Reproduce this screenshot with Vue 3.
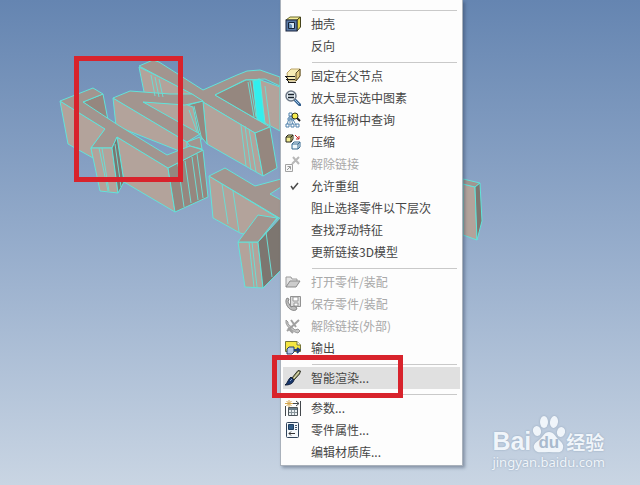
<template>
  <div class="viewport">
    <!-- 图标定义 -->
    <svg class="defs" aria-hidden="true">
      <symbol id="shell" viewBox="0 0 16 16">
        <path d="M1 4 5 1H15L12 4Z" fill="#f7ef9a" stroke="#6b6a2c" />
        <path d="M12 4 15.500 1V11L12 15Z" fill="#e3d54a" stroke="#45431c" />
        <rect x="1" y="4" width="11" height="11" fill="#5a7aa6" stroke="#1c2740" />
        <path d="M3.500 6.500H9.500V12.500H3.500Z" fill="#d7e8f5" stroke="#152238" />
        <path d="M4 12V7L7 9V12Z" fill="#6b94bd" />
      </symbol>
      <symbol id="fixed" viewBox="0 0 16 16">
        <path d="M2 5 6 1H15V8L11 13H3Z" fill="#f8edb5" stroke="#b9a368" />
        <path d="M11 5 15 1V8L11 13Z" fill="#e5cd82" stroke="#5b4d28" />
        <path d="M0 8.500H10M1 11.500H10M3 14.500H11M0 8 3 11M1 11 4 14" fill="none" stroke="#1d1c18" />
      </symbol>
      <symbol id="zoom" viewBox="0 0 16 16">
        <path d="m10 10 5 5" stroke="#35608f" stroke-width="3" stroke-linecap="round" />
        <path d="m10 10 4 4" stroke="#9bc4e5" />
        <circle cx="6" cy="6" r="5" fill="#e9f1f7" stroke="#6d7886" stroke-width="1.500" />
        <path d="M3 4.500H9M3 7.500H9" stroke="#17202a" stroke-width="1.500" />
      </symbol>
      <symbol id="tree" viewBox="0 0 16 16">
        <path d="M5 2 2 13M5 2 8 13M5 6V13M5 2 11 13" fill="none" stroke="#5d8ab0" />
        <path d="M4 1H7V4H4ZM3 6H5V8H3ZM7 6H9V8H7ZM1 12H4V15H1ZM6 12H9V15H6ZM11 12H14V15H11Z" fill="#fff" stroke="#4f80ab" />
        <circle cx="10" cy="4" r="3" fill="#f5ec4f" stroke="#39391b" />
        <path d="m12 6 3 3" stroke="#222" stroke-width="2" />
      </symbol>
      <symbol id="compress" viewBox="0 0 16 16">
        <path d="M1 3 3 1H8V5L6 8H1Z" fill="#f3ee93" stroke="#272719" />
        <path d="M1 3H6V8M6 3 8 1" fill="none" stroke="#272719" />
        <path d="m10 1 4 4M14 2V5H11" fill="none" stroke="#c72525" />
        <path d="M7 10 9 8H15V13L13 15H7ZM7 10H13V15M13 10 15 8" fill="#eff8fc" stroke="#34698f" />
      </symbol>
      <symbol id="unlink" viewBox="0 0 16 16">
        <path d="m8 1 6 7M14 1 7 8" stroke="#b8b8b8" stroke-width="2" />
        <path d="M0.500 8.500H7.500V15.500H0.500Z" fill="#f7f7f7" stroke="#a2a2a2" />
        <path d="m2 14 3-3M2.500 10.500H5.500V13.500" fill="none" stroke="#999" />
      </symbol>
      <symbol id="check" viewBox="0 0 16 16">
        <path d="m6 8 2 3 5-6" fill="none" stroke="#4b4b4b" stroke-width="1.500" />
      </symbol>
      <symbol id="open" viewBox="0 0 16 16">
        <path d="M1 13V3H6L7 5H12V7" fill="#e4e4e4" stroke="#9b9b9b" />
        <path d="M1 13 5 7H15L11 13Z" fill="#ccc" stroke="#8b8b8b" />
      </symbol>
      <symbol id="save" viewBox="0 0 16 16">
        <path d="M5.500 0.500H15.500V10.500H5.500Z" fill="#ddd" stroke="#929292" />
        <path d="M8 1H13V5H8ZM9 7H13V10H9Z" fill="#fff" stroke="#999" />
        <path d="M2 2 4 3 3 6 6 11 9 10 12 12 11 14C6 16 0 10 1 4Z" fill="#bdbdbd" stroke="#888" />
      </symbol>
      <symbol id="external" viewBox="0 0 16 16">
        <path d="M1 2 3 4V6L10 12 13 11 15 13 13 15C8 14 2 9 1 5Z" fill="#c5c5c5" stroke="#999" />
        <path d="M2 13 14 2M6 2 11 9M3 10 8 15" stroke="#a0a0a0" stroke-width="2" />
      </symbol>
      <symbol id="export" viewBox="0 0 16 16">
        <path d="M0.500 1.500H12L15.500 5V11.500H0.500Z" fill="#f4e642" stroke="#777739" />
        <path d="M12 1.500V5H15.500" fill="#fff" stroke="#777739" />
        <path d="M2 9 4 7H9V12L7 14H2Z" fill="#b3c9e8" stroke="#263e68" />
        <path d="M9 10H14M12 8 14.500 10 12 13" fill="none" stroke="#203d79" stroke-width="2" />
      </symbol>
      <symbol id="brush" viewBox="0 0 16 16">
        <path d="M7 8 13 0.500 15.500 1 14.500 4 9 10Z" fill="#9a9b6c" stroke="#303328" />
        <path d="m9 8 5-6" stroke="#eeeac2" />
        <path d="M6 7 9 10C8 14 4 15 0 15 3 13 3 9 6 7Z" fill="#19376c" stroke="#14213b" />
        <path d="m5 11 2-2" stroke="#88a2c9" />
      </symbol>
      <symbol id="params" viewBox="0 0 16 16">
        <path d="M0.500 6V16M15.500 1V16M7 3.500H14M11 1 14 3.500 11 6" fill="none" stroke="#43484c" />
        <path d="M3.500 7.500H12.500V15.500H3.500Z" fill="#e9eef0" stroke="#4e565b" />
        <path d="M4 8H12V10H4Z" fill="#697c88" />
        <path d="M4 12.500H12M6.500 10V15M9.500 10V15" stroke="#88949a" />
        <path d="M4 0V7M0 3.500H8M1.500 1 6.500 6M6.500 1 1.500 6" stroke="#d4a54b" />
      </symbol>
      <symbol id="props" viewBox="0 0 16 16">
        <rect x="1.500" y="0.500" width="12" height="15" rx="1" fill="#f4f8fb" stroke="#30445b" />
        <path d="M3.500 2.500H8.500V7.500H3.500Z" fill="#315d87" stroke="#203e60" />
        <path d="M10 3.500H12M10 5.500H12M10 7.500H12" stroke="#44576b" />
        <path d="M4 11.500H10M6 9.500 4 11.500 6 13.500" fill="none" stroke="#333" />
      </symbol>
    </svg>

    <!-- 三维模型 -->
    <svg class="model" width="640" height="485" viewBox="0 0 640 485" aria-hidden="true">
      <polygon v-for="(face, i) in faces" :key="i" :class="face[0]" :points="face[1]" />
      <path class="seam" d="M151 75 155 96M155 77 159 97M159 79 163 97M189 110 197 132M194 106 202 140M241 125 246 166M245 126 251 170M249 129 256 172M248 82 254 117M250 81 256 117M265 86 270 125" />
      <path class="seam" d="M99 148 108 191M102 148 109 191M115 144 121 187M178 164 184 207M185 161 191 203M192 157 198 200M197 154 203 198M222 184 228 224M233 191 239 232M249 242 254 287M252 242 257 287M266 232 272 277" />
      <polygon class="bright" points="253,81 260,79 265,124 257,119" />
    </svg>

    <!-- 右键菜单 -->
    <ul class="menu">
      <template v-for="(group, g) in groups" :key="g">
        <li class="line"></li>
        <li v-for="item in group" :key="item.text">
          <button type="button" class="item" :class="{ active: item.active }" :disabled="item.disabled">
            <svg class="icon" width="16" height="16" aria-hidden="true">
              <use v-if="item.icon" :href="'#' + item.icon" />
            </svg>
            <span>{{ item.text }}</span>
          </button>
        </li>
      </template>
    </ul>

    <!-- 红色标注框 -->
    <div class="mark mark-model"></div>
    <div class="mark mark-item"></div>

    <!-- 水印 -->
    <div class="watermark">
      <div class="brand">
        <span class="bai">Bai</span>
        <span class="paw">
          <svg width="33" height="37" viewBox="0 0 33 37" aria-hidden="true">
            <ellipse cx="5" cy="15" rx="4" ry="5" transform="rotate(-15 5 15)" />
            <ellipse cx="12" cy="6" rx="4" ry="6" />
            <ellipse cx="22" cy="6" rx="4" ry="6" transform="rotate(8 22 6)" />
            <ellipse cx="29" cy="16" rx="4" ry="5" transform="rotate(15 29 16)" />
            <path d="M17 16C12 16 11 21 7 24C3 27 1 29 2 32C4 38 10 36 17 36C24 36 30 38 31 32C32 28 29 26 26 23C23 20 22 16 17 16Z" />
          </svg>
          <span class="du">du</span>
        </span>
        <span class="cn">经验</span>
      </div>
      <div class="url">jingyan.baidu.com</div>
    </div>
  </div>
</template>

<script setup>
// 模型的各个面，按从后到前的顺序绘制
const faces = [
  ['side', '139,67 192,93 185,104 145,97'],
  ['top', '139,66 153,60 159,62 203,90 237,75 247,71 260,70 280,77 280,86 265,79 245,80 215,95 270,127 255,133 203,102 192,94'],
  ['dark', '215,95 246,80 253,80 258,120'],
  ['side', '258,79 280,87 280,131 265,123'],
  ['side', '203,102 255,133 263,176 207,144'],
  ['dark', '255,133 270,127 277,168 263,176'],
  ['dark', '188,105 203,101 207,144 199,134'],
  ['side', '143,102 185,104 193,107 199,135'],
  ['side', '113,98 187,142 187,154 116,126'],
  ['top', '113,98 130,91 170,94 192,94 203,101 185,105 143,102 200,134 187,142'],
  ['top', '187,142 200,137 202,149 190,146'],
  ['dark', '83,102 103,94 108,120'],
  ['side', '60,101 105,129 91,148 93,158 68,144'],
  ['side', '117,137 168,168 175,212 124,182'],
  ['dark', '168,168 203,150 208,197 175,212'],
  ['top', '60,101 93,88 103,94 83,102 118,125 167,155 190,146 203,150 168,168 117,137 112,148 91,148 105,129'],
  ['side', '91,148 112,148 118,193 100,191'],
  ['deep', '112,148 117,137 124,182 118,193'],
  ['side', '209,176 278,218 258,238 240,233 213,218'],
  ['top', '209,176 225,168 255,186 281,179 281,187 270,194 281,200 281,219'],
  ['side', '238,242 258,242 263,288 245,287'],
  ['deep', '258,242 281,217 281,270 263,288'],
  ['top', '238,242 258,215 277,218 258,242'],
  ['side', '463,184 475,187 477,240 463,235'],
  ['top', '463,179 480,183 475,187 463,184'],
  ['deep', '475,187 480,183 482,221 477,240']
]

const groups = [
  [
    { text: '抽壳', icon: 'shell' },
    { text: '反向' }
  ],
  [
    { text: '固定在父节点', icon: 'fixed' },
    { text: '放大显示选中图素', icon: 'zoom' },
    { text: '在特征树中查询', icon: 'tree' },
    { text: '压缩', icon: 'compress' },
    { text: '解除链接', icon: 'unlink', disabled: true },
    { text: '允许重组', icon: 'check' },
    { text: '阻止选择零件以下层次' },
    { text: '查找浮动特征' },
    { text: '更新链接3D模型' }
  ],
  [
    { text: '打开零件/装配', icon: 'open', disabled: true },
    { text: '保存零件/装配', icon: 'save', disabled: true },
    { text: '解除链接(外部)', icon: 'external', disabled: true },
    { text: '输出', icon: 'export' }
  ],
  [
    { text: '智能渲染...', icon: 'brush', active: true }
  ],
  [
    { text: '参数...', icon: 'params' },
    { text: '零件属性...', icon: 'props' },
    { text: '编辑材质库...' }
  ]
]
</script>

<style>
body {
  margin: 0;
}
</style>

<style scoped>
.viewport {
  position: relative;
  min-height: 100vh;
  overflow: hidden;
  background: linear-gradient(#6585b1, #95accb 50%, #c9d5e3);
  font-family: 'Noto Sans CJK SC', sans-serif;
}

.defs {
  position: absolute;
  width: 0;
  height: 0;
}

.model {
  position: absolute;
  top: 0;
  left: 0;
}

.model polygon {
  stroke: #62e3da;
  stroke-width: 1;
  stroke-linejoin: round;
}

.model .top {
  fill: #a2958f;
}

.model .side {
  fill: #b3a39b;
}

.model .dark {
  fill: #95877f;
}

.model .deep {
  fill: #7d7670;
}

.model .bright {
  fill: #31eeee;
}

.seam {
  fill: none;
  stroke: #6ddcd3;
}

.menu {
  position: absolute;
  top: 0;
  left: 280px;
  box-sizing: border-box;
  min-width: 183px;
  margin: 0;
  padding: 5px 2px 2px;
  list-style: none;
  background: #fdfdfd;
  border: solid #a9b1bb;
  border-width: 0 1px 1px;
  box-shadow: 2px 2px 3px rgba(40, 55, 80, 0.4);
}

.line {
  height: 1px;
  margin: 5px 3px 2px 29px;
  background: #c9c9c9;
}

.item {
  display: flex;
  align-items: center;
  gap: 10px;
  width: 100%;
  height: 22px;
  padding: 0 2px;
  border: none;
  background: transparent;
  color: #464646;
  font-family: inherit;
  font-size: 12px;
  line-height: 22px;
  text-align: left;
  white-space: nowrap;
}

.item:disabled {
  color: #a8a8a8;
}

.item:hover:enabled,
.item.active {
  background: #e0e0e0;
}

.icon {
  flex: none;
}

.mark {
  position: absolute;
  box-sizing: border-box;
  border: 5px solid #d8232c;
  pointer-events: none;
}

.mark-model {
  top: 56px;
  left: 74px;
  width: 109px;
  height: 126px;
}

.mark-item {
  top: 355px;
  left: 272px;
  width: 131px;
  height: 43px;
}

.watermark {
  position: absolute;
  right: 35px;
  bottom: 14px;
  color: #f0f5fa;
  text-shadow: 0 0 2px #8fa2b8;
}

.brand {
  display: flex;
  align-items: flex-end;
  height: 37px;
}

.bai {
  font-family: 'Liberation Sans', sans-serif;
  font-size: 25px;
  font-weight: bold;
  line-height: 24px;
}

.paw {
  position: relative;
  display: block;
  height: 37px;
  margin: 0 1px;
}

.paw svg {
  display: block;
  fill: #f0f5fa;
  filter: drop-shadow(0 0 1px #97a9bd);
}

.du {
  position: absolute;
  bottom: 1px;
  left: 0;
  width: 100%;
  color: #a9bacd;
  font-family: 'Liberation Sans', sans-serif;
  font-size: 17px;
  font-weight: bold;
  line-height: 18px;
  text-align: center;
  text-shadow: none;
}

.cn {
  font-size: 19px;
  font-weight: bold;
  line-height: 22px;
}

.url {
  font-family: 'Noto Sans', sans-serif;
  font-size: 13px;
  line-height: 18px;
}
</style>
